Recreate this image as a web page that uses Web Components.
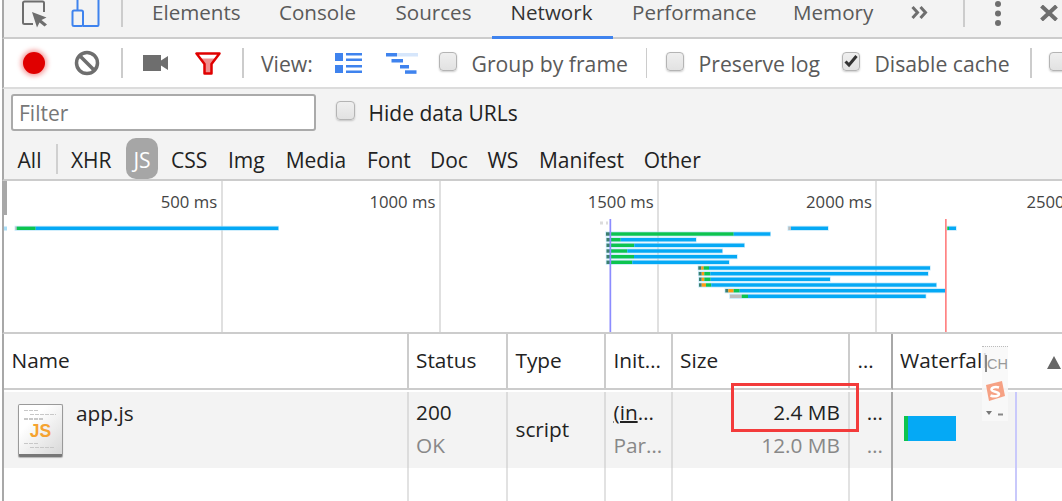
<!doctype html>
<html><head><meta charset="utf-8"><title>Network</title>
<style>
html,body{margin:0;padding:0;background:#fff}
body{width:1062px;height:501px;overflow:hidden;font-family:"Open Sans","Noto Sans",sans-serif;font-size:20.6px;color:#222}
dt-app{display:block}
</style></head><body>
<dt-app>
  <dt-tabbar>
    <dt-tab style="--w:127px">Elements</dt-tab>
    <dt-tab style="--w:116.5px">Console</dt-tab>
    <dt-tab style="--w:115px">Sources</dt-tab>
    <dt-tab style="--w:121.5px" active>Network</dt-tab>
    <dt-tab style="--w:161px">Performance</dt-tab>
    <dt-tab style="--w:117.7px">Memory</dt-tab>
  </dt-tabbar>
  <dt-toolbar></dt-toolbar>
  <dt-filterbar></dt-filterbar>
  <dt-overview></dt-overview>
  <dt-table></dt-table>
</dt-app>
<script>
function def(name, css, html, init){
  customElements.define(name, class extends HTMLElement{
    constructor(){super();
      const r=this.attachShadow({mode:'open'});
      r.innerHTML='<style>'+css+'</style>'+(typeof html==='function'?html(this):html);
      if(init)init(r,this);
    }
  });
}
const GR='#6e6e6e', BL='#3f83ee';

def('dt-check',`
  :host{display:flex;align-items:center;flex:none;width:var(--w,190px);color:#5a5a5a;white-space:nowrap;line-height:28px;padding-top:1px}
  .b{box-sizing:border-box;flex:none;width:18.5px;height:18.5px;border-radius:4px;border:1.5px solid #b4b4b4;
     background:linear-gradient(#efefef,#e2e2e2);box-shadow:0 1px 2px rgba(0,0,0,.2);margin:-4px 14px 0 0;display:block}
  svg{display:block;margin:1px}
`,h=>`<span class="b">${h.hasAttribute('checked')?`<svg width="14" height="14" viewBox="0 0 14 14"><path d="M1.5 7.5l3.5 3.5 7.5-9" fill="none" stroke="#333" stroke-width="3"/></svg>`:''}</span><slot></slot>`);

def('dt-sep',`:host{display:block;flex:none;width:var(--w,2px);height:var(--h,30px);background:var(--c,#ccc)}`,'');

def('dt-tab',`
  :host{display:block;flex:none;box-sizing:border-box;width:var(--w);padding-left:19px;height:37px;line-height:25px;color:#5a5a5a;position:relative;white-space:nowrap}
  :host([active]){color:#333}
  :host([active])::after{content:"";position:absolute;left:0;right:0;top:36px;height:3px;background:${BL}}
`,'<slot></slot>');

def('dt-tabbar',`
  :host{display:flex;align-items:flex-start;height:37px;border-bottom:2px solid #ccc;background:#f3f3f3;margin-left:2px;border-left:2px solid #a8a8a8;position:relative;overflow:visible}
  svg{display:block;flex:none}
  .tabs{display:flex;margin-left:10px}
`,`
  <svg style="margin-left:16px" width="82" height="37" viewBox="20 0 82 37">
    <path d="M44 12V3a1.5 1.5 0 0 0-1.5-1.5H24.5A1.5 1.5 0 0 0 23 3v19.5A1.5 1.5 0 0 0 24.5 24H33" fill="none" stroke="${GR}" stroke-width="2"/>
    <path d="M32 12l14.500 5.500-5 2.500 5.500 4.500-2.500 2-5-4-2.500 5z" fill="${GR}"/>
    <path d="M77.500-2V10M98.500-2V25a1 1 0 0 1-1 1H83" fill="none" stroke="${BL}" stroke-width="2"/>
    <rect x="72.500" y="10.500" width="10.500" height="15.500" rx="1.500" fill="none" stroke="${BL}" stroke-width="2"/>
  </svg>
  <dt-sep style="margin-left:19px;--h:27px;--c:#ccc"></dt-sep>
  <div class="tabs"><slot></slot></div>
  <svg style="margin-left:19px;margin-top:6px" width="17" height="13" viewBox="0 0 17 13"><path d="M1.500 1l5 5.500-5 5.500M9.500 1l5 5.500-5 5.500" fill="none" stroke="${GR}" stroke-width="3"/></svg>
  <dt-sep style="margin-left:35px;--h:27px;--c:#ccc"></dt-sep>
  <svg style="margin-left:27px" width="12" height="27" viewBox="0 0 12 27"><circle cx="6" cy="4" r="3" fill="${GR}"/><circle cx="6" cy="13.500" r="3" fill="${GR}"/><circle cx="6" cy="23" r="3" fill="${GR}"/></svg>
  <svg style="margin-left:36.700px;margin-top:5px" width="18" height="16" viewBox="0 0 18 16"><path d="M1.500 1l15 14M16.500 1l-15 14" fill="none" stroke="${GR}" stroke-width="4"/></svg>
`);

def('dt-toolbar',`
  :host{display:flex;align-items:center;height:48px;border-bottom:2px solid #dcdcdc;background:#fff;margin-left:2px;border-left:2px solid #a8a8a8;overflow:hidden;color:#5a5a5a;white-space:nowrap;font-size:21.2px}
  svg{display:block;flex:none}
  .rec{flex:none;width:22px;height:22px;border-radius:50%;background:#e00000;box-shadow:0 0 5px 2px rgba(230,0,0,.4);margin-left:18.700px;margin-top:-1px}
  .lbl{flex:none;width:52px;margin-left:17px;line-height:28px;padding-top:1px}
`,`
  <div class="rec"></div>
  <svg style="margin-left:29.300px" width="26" height="26" viewBox="0 0 26 26"><circle cx="13" cy="13" r="10.500" fill="none" stroke="${GR}" stroke-width="3.500"/><path d="M5.500 5.500l15 15" stroke="${GR}" stroke-width="3.500"/></svg>
  <dt-sep style="margin-left:21px"></dt-sep>
  <svg style="margin-left:20px" width="25" height="16" viewBox="0 0 25 16"><path d="M0 0H18V5.500L25 1V15L18 10.500V16H0z" fill="${GR}"/></svg>
  <svg style="margin-left:27px" width="26" height="23" viewBox="0 0 26 23"><path d="M1.500 1.500H24.500L16.500 12V21.500H9.500V12z" fill="#ef8f8f"/><path d="M2 2H24L20.500 6.500H5.500z" fill="#fff"/><path d="M1.500 1.500H24.500L16.500 12V21.500H9.500V12z" fill="none" stroke="#e00000" stroke-width="2.500" stroke-linejoin="round"/></svg>
  <dt-sep style="margin-left:21px"></dt-sep>
  <span class="lbl">View:</span>
  <svg style="margin-left:22px" width="27" height="20" viewBox="0 0 27 20" fill="${BL}"><rect width="8" height="8"/><rect y="12" width="8" height="8"/><rect x="11" width="16" height="2.500"/><rect x="11" y="5.500" width="16" height="2.500"/><rect x="11" y="12" width="16" height="2.500"/><rect x="11" y="17.500" width="16" height="2.500"/></svg>
  <svg style="margin-left:24px" width="32" height="21" viewBox="0 0 32 21" fill="${BL}"><rect x="11" width="21" height="3.500" fill="#d6e6fb"/><rect width="11" height="3.500"/><rect x="5.500" y="6" width="11.500" height="3.500"/><rect x="14" y="12" width="9" height="3.500"/><rect x="19" y="17.300" width="11.500" height="3.500"/></svg>
  <dt-check style="margin-left:21px;--w:190px">Group by frame</dt-check>
  <dt-sep style="margin-left:17px;--w:1px"></dt-sep>
  <dt-check style="margin-left:19px;--w:160px">Preserve log</dt-check>
  <dt-check style="margin-left:16px;--w:172px" checked>Disable cache</dt-check>
  <dt-sep style="margin-left:16px"></dt-sep>
  <dt-check style="margin-left:17px;--w:30px"></dt-check>
`);

def('dt-filter-item',`
  :host{display:flex;align-items:center;flex:none;box-sizing:border-box;padding-top:3px;width:var(--w);height:41px;white-space:nowrap;color:#222}
  :host([on]){background:#a6a6a6;color:#fff;border-radius:10px;justify-content:center}
`,'<slot></slot>');

def('dt-filterbar',`
  :host{display:block;height:90px;border-bottom:2px solid #ccc;background:#f3f3f3;margin-left:2px;border-left:2px solid #a8a8a8;overflow:hidden;font-size:21px}
  .r1{display:flex;align-items:center;height:49px;padding-bottom:3px;box-sizing:border-box}
  .inp{box-sizing:border-box;flex:none;width:305px;height:37px;margin-left:7px;border:2px solid #aaa;border-radius:3px;background:#fff;color:#777;line-height:35px;padding-left:6px}
  .r2{display:flex;align-items:center;height:41px;padding-left:13.600px}
`,`
  <div class="r1"><div class="inp">Filter</div><dt-check style="margin-left:20px;--w:210px;color:#222">Hide data URLs</dt-check></div>
  <div class="r2">
    <dt-filter-item style="--w:38.400px">All</dt-filter-item>
    <dt-sep style="--h:30px;--c:#d0d0d0"></dt-sep>
    <dt-filter-item style="--w:55px;margin-left:13px">XHR</dt-filter-item>
    <dt-filter-item style="--w:32px" on>JS</dt-filter-item>
    <dt-filter-item style="--w:57px;margin-left:13px">CSS</dt-filter-item>
    <dt-filter-item style="--w:57.700px">Img</dt-filter-item>
    <dt-filter-item style="--w:81.300px">Media</dt-filter-item>
    <dt-filter-item style="--w:63px">Font</dt-filter-item>
    <dt-filter-item style="--w:57.500px">Doc</dt-filter-item>
    <dt-filter-item style="--w:51.500px">WS</dt-filter-item>
    <dt-filter-item style="--w:104.700px">Manifest</dt-filter-item>
    <dt-filter-item style="--w:70px">Other</dt-filter-item>
  </div>
`);

const B='#05a9f5',G='#0cc44f',D='#3c7f6e',O='#ff9a12',Y='#bdbdbd';
const rows=[
 [228.3,[[15.3,16.7,Y],[16.7,35.7,G],[35.7,278.3,B]]],
 [228.3,[[788.3,791,Y],[791,828,B]]],
 [228.3,[[947.3,949,G],[949,956,B]]],
 [234,[[606,610,D],[610,733.7,G],[733.7,770.3,B]]],
 [239.7,[[606.5,610,D],[610,620.7,G],[620.7,696,B]]],
 [245.3,[[606.5,610,D],[610,634.3,G],[634.3,744.3,B]]],
 [251,[[606.5,610,D],[610,627.3,G],[627.3,722.3,B]]],
 [256.7,[[606.5,610,D],[610,634,G],[634,737,B]]],
 [262.3,[[606.5,610,D],[610,632.3,G],[632.3,729,B]]],
 [268,[[698.3,701.3,D],[701.3,703.7,O],[703.7,709,G],[709,930,B]]],
 [273.7,[[698.7,701.7,D],[701.7,704.3,O],[704.3,710.3,G],[710.3,928,B]]],
 [279.3,[[699,701.7,D],[701.7,704.3,O],[704.3,710.7,G],[710.7,830,B]]],
 [285,[[699,701.7,D],[701.7,706,O],[706,711.3,G],[711.3,936.3,B]]],
 [290.7,[[725.3,728.3,D],[728.3,733.7,O],[733.7,739.7,G],[739.7,945,B]]],
 [296.3,[[730,741.7,Y],[741.7,748,G],[748,925.7,B]]]
];
let bars='';
for(const [y,segs] of rows){
  const a=segs[0][0],e=segs[segs.length-1][1];
  bars+=`<rect x="${a-.7}" y="${y-2.5}" width="${e-a+1.4}" height="5" fill="#9fdcfa" opacity=".6"/>`;
  for(const [s,t,c] of segs)bars+=`<rect x="${s}" y="${y-1.7}" width="${t-s}" height="3.4" fill="${c}"/>`;
}
def('dt-tick',`
  :host{display:block;flex:none;box-sizing:border-box;width:218.300px;height:151px;border-right:2px solid #e0e0e0;padding:9px 3.500px 0 0;text-align:right;font-size:16.700px;line-height:24px;color:#444;white-space:nowrap}
`,'<slot></slot>');
def('dt-overview',`
  :host{display:block;height:151px;border-bottom:2px solid #ccc;margin-left:2px;border-left:2px solid #a8a8a8;position:relative;overflow:hidden;background:#fff}
  .t{display:flex;width:1100px;padding-left:.3px}
  svg{position:absolute;left:0;top:0}
`,`
  <div class="t"><dt-tick>500 ms</dt-tick><dt-tick>1000 ms</dt-tick><dt-tick>1500 ms</dt-tick><dt-tick>2000 ms</dt-tick><dt-tick style="border:0">2500 ms</dt-tick></div>
  <svg width="1058" height="151" viewBox="4 181 1058 151">
    <rect x="4" y="181" width="3" height="34" fill="#a8a8a8"/>
    <rect x="4" y="226.500" width="3" height="4" fill="#a9def8"/>
    <rect x="600" y="221.500" width="3" height="3" fill="#dcdcdc"/><rect x="606" y="221.500" width="2" height="3" fill="#dcdcdc"/>
    ${bars}
    <rect x="609.500" y="219" width="1.700" height="113" fill="#8c8cff"/>
    <rect x="945" y="219" width="1.700" height="113" fill="#ff8484"/>
  </svg>
`);

def('dt-file-icon',`
  :host{display:flex;flex-direction:column;align-items:center;box-sizing:border-box;flex:none;width:45px;height:53px;border:1.500px solid #9a9a9a;border-bottom:3px solid #777;border-radius:2px;background:linear-gradient(135deg,#fff 30%,#d8d8d8);font:bold 17.500px/16px "Liberation Sans",sans-serif;color:#f5a331;padding:5px 5px 0;box-shadow:0 1px 1px rgba(0,0,0,.25)}
  i{display:block;height:1.200px;background:repeating-linear-gradient(90deg,#c8c8c8 0 4px,transparent 4px 5px);align-self:flex-start}
  b{font-weight:bold;display:block;margin:3px 0 4px}
`,`<i style="width:15px"></i><i style="width:26px;margin:3px 0 0 6px"></i><i style="width:20px;margin:3px 0 0 0"></i><b>JS</b><i style="width:14px"></i><i style="width:24px;margin:3px 0 0 6px"></i>`);

def('dt-cell',`
  :host{display:block;box-sizing:border-box;min-width:0;border-right:2px solid var(--sep,#dcdcdc);padding-left:var(--pl,7.500px);overflow:hidden;white-space:nowrap}
`,'<slot></slot>');

def('dt-ime',`
  :host{display:block;position:absolute;left:978px;top:12px;width:26px;height:75px;box-sizing:border-box;background:rgba(248,248,248,.85);border-top:1px dotted #bbb;font:14.500px/18px "Liberation Sans",sans-serif;color:#999}
  .c{position:absolute;left:5px;top:8px}
  .bar{position:absolute;left:3px;top:8px;width:1.500px;height:17px;background:#888}
  svg{position:absolute;left:3px;top:34px}
`,`<span class="bar"></span><span class="c">CH</span>
  <svg width="20" height="20" viewBox="0 0 20 20"><path d="M1 4L17 0l3 15-16 5z" fill="#f6a184"/><path d="M14 6.500C11 5.500 6.500 6 6.500 8.500S14 10.500 14 13c0 2.500-5 3-8.500 1.500" fill="none" stroke="#fff" stroke-width="2.500"/></svg>
  <svg style="top:64px" width="18" height="6" viewBox="0 0 18 6"><path d="M1 0h6L4 4z" fill="#777"/><rect x="13" y="2.500" width="5" height="2" fill="#888"/></svg>`);

const COLS='404.500px 99.500px 98px 66.500px 177.500px 43px 1fr';
def('dt-table',`
  :host{display:block;position:relative;height:168px;margin-left:2px;border-left:2px solid #a8a8a8;overflow:hidden;background:#fff;font-size:20.800px}
  .g{display:grid;grid-template-columns:${COLS}}
  .h{height:58px;--sep:#ccc}
  .h dt-cell{height:56px;line-height:52px;border-bottom:2px solid #ccc}
  .w{--sep:#a8a8a8}
  dt-cell.w{border-right:0;position:relative}
  .r{height:76px;background:#f3f3f3;--sep:#dcdcdc}
  .r dt-cell{padding-top:4px;line-height:33px}
  .f{height:34px;--sep:#e2e2e2}
  .s{color:#888}
  .rt{text-align:right;padding-right:8px}
  .mid{display:flex;align-items:center;padding-top:0!important;padding-bottom:2px}
  .nm{display:flex;gap:13px;padding-left:14px;padding-top:12px!important}
  .nm span{line-height:18px}
  u{text-decoration-thickness:1.500px}
  .d{--sep:#a8a8a8;border-right-width:2.500px}
  .tri{position:absolute;right:1px;top:22px;width:0;height:0;border:7.500px solid transparent;border-top:0;border-bottom:13px solid #666}
  .line{position:absolute;left:1011px;top:58px;bottom:0;width:1.500px;background:#c9c9fb}
  .wb{position:absolute;left:900px;top:82px;width:51.500px;height:25px;background:${B};border-left:4px solid ${G};box-sizing:border-box}
`,`
  <div class="g h">
    <dt-cell>Name</dt-cell><dt-cell>Status</dt-cell><dt-cell>Type</dt-cell><dt-cell>Init…</dt-cell><dt-cell>Size</dt-cell><dt-cell class="d">…</dt-cell>
    <dt-cell class="w" style="--pl:7px">Waterfall<span class="tri"></span></dt-cell>
  </div>
  <div class="g r">
    <dt-cell class="nm"><dt-file-icon></dt-file-icon><span>app.js</span></dt-cell>
    <dt-cell>200<br><span class="s">OK</span></dt-cell>
    <dt-cell class="mid">script</dt-cell>
    <dt-cell><u>(in</u>…<br><span class="s">Par…</span></dt-cell>
    <dt-cell class="rt">2.4 MB<br><span class="s">12.0 MB</span></dt-cell>
    <dt-cell class="d rt">…<br><span class="s">…</span></dt-cell>
    <dt-cell class="w"></dt-cell>
  </div>
  <div class="g f">
    <dt-cell></dt-cell><dt-cell></dt-cell><dt-cell></dt-cell><dt-cell></dt-cell><dt-cell></dt-cell><dt-cell class="d"></dt-cell><dt-cell class="w"></dt-cell>
  </div>
  <div class="line"></div>
  <div class="wb"></div>
  <dt-ime></dt-ime>
  <dt-redbox></dt-redbox>
`);
def('dt-redbox',`:host{display:block;position:absolute;left:727px;top:49px;width:128px;height:49px;box-sizing:border-box;border:3px solid #f33b3b}`,'');
</script>
</body></html>
